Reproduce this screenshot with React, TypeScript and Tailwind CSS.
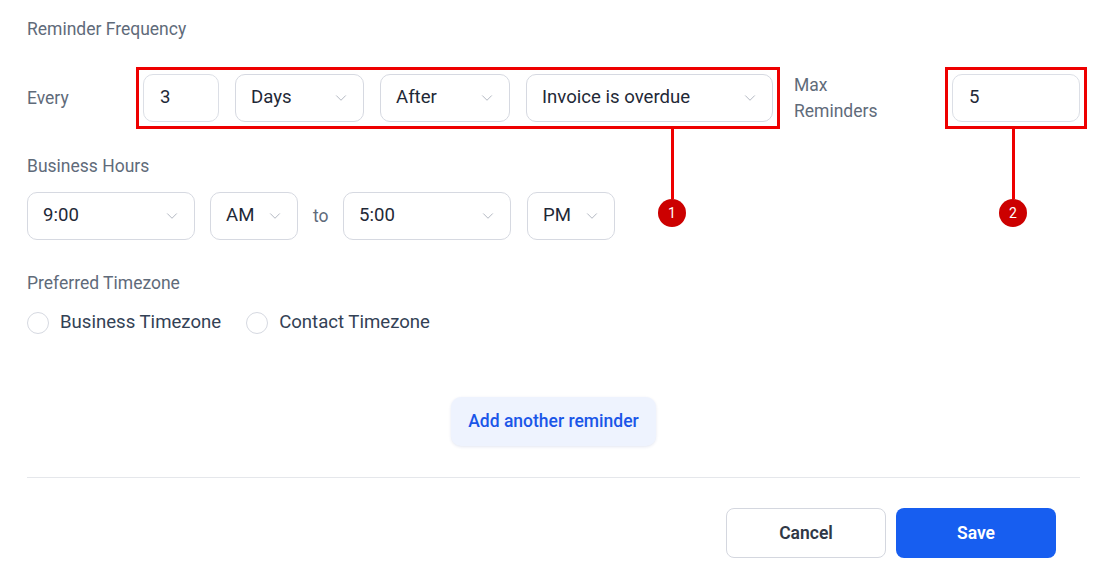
import React from 'react';
import { ChevronDown } from 'lucide-react';

const font = { fontFamily: 'Roboto, "Noto Sans", sans-serif' };

const Select = ({ value, width }: { value: string; width: string }) => (
  <div
    className={`${width} h-12 flex items-center justify-between pl-[15px] pr-[13px] bg-white border border-[#d6d9e1] rounded-[10px] text-[18.6px] text-[#1f2937]`}
  >
    <span>{value}</span>
    <ChevronDown className="w-[18px] h-[18px] text-[#a3a9b5]" strokeWidth={1.1} />
  </div>
);

const TextBox = ({ value, width }: { value: string; width: string }) => (
  <div
    className={`${width} h-12 flex items-center px-[16px] bg-white border border-[#dcdfe6] rounded-[10px] text-[18.6px] text-[#1f2937]`}
  >
    {value}
  </div>
);

// red callout frame with a numbered pin hanging under it
const Callout = ({ num, left }: { num: number; left: string }) => (
  <>
    <div className="absolute -inset-[7px] border-[3px] border-[#ee0000] pointer-events-none" />
    <div className={`absolute top-[55px] ${left} flex flex-col items-center -translate-x-1/2`}>
      <div className="w-[3px] h-[70px] bg-[#ee0000]" />
      <div className="w-7 h-7 rounded-full bg-[#cc0000] text-white text-[14px] flex items-center justify-center">
        {num}
      </div>
    </div>
  </>
);

const Radio = ({ label }: { label: string }) => (
  <label className="flex items-center gap-[11px]">
    <span className="w-[22px] h-[22px] rounded-full border border-[#d6d9e1] bg-white" />
    <span className="text-[18.6px] text-[#334155]">{label}</span>
  </label>
);

const App: React.FC = () => {
  return (
    <div className="w-[1102px] h-[576px] bg-white overflow-hidden pl-[27px] pr-[22px] pt-[17px]" style={font}>
      <div className="text-[17.5px] leading-6 text-[#5f6b7a]">Reminder Frequency</div>

      <div className="mt-[33px] flex items-center">
        <div className="w-[116px] text-[17.5px] text-[#5f6b7a]">Every</div>
        <div className="relative flex gap-4">
          <TextBox value="3" width="w-[76px]" />
          <Select value="Days" width="w-[129px]" />
          <Select value="After" width="w-[130px]" />
          <Select value="Invoice is overdue" width="w-[247px]" />
          <Callout num={1} left="left-[529px]" />
        </div>
        <div className="ml-[21px] w-[158px] -my-[2px] text-[17.5px] leading-[26px] text-[#5f6b7a]">
          Max
          <br />
          Reminders
        </div>
        <div className="relative">
          <TextBox value="5" width="w-[128px]" />
          <Callout num={2} left="left-[61px]" />
        </div>
      </div>

      <div className="mt-[32px] text-[17.5px] leading-6 text-[#5f6b7a]">Business Hours</div>
      <div className="mt-[14px] flex items-center">
        <Select value="9:00" width="w-[168px]" />
        <div className="ml-[15px]">
          <Select value="AM" width="w-[88px]" />
        </div>
        <span className="ml-[15px] w-[15px] text-[17.5px] text-[#5f6b7a]">to</span>
        <div className="ml-[15px]">
          <Select value="5:00" width="w-[168px]" />
        </div>
        <div className="ml-[16px]">
          <Select value="PM" width="w-[88px]" />
        </div>
      </div>

      <div className="mt-[31px] text-[17.5px] leading-6 text-[#5f6b7a]">Preferred Timezone</div>
      <div className="mt-[16px] h-6 flex items-center gap-[25px]">
        <Radio label="Business Timezone" />
        <Radio label="Contact Timezone" />
      </div>

      <div className="mt-[62px] flex justify-center">
        <button className="h-[49px] px-[17px] rounded-[10px] bg-[#eef3fe] shadow-[0_1px_3px_rgba(30,60,140,0.12)] text-[17.5px] font-medium text-[#1a56e8]">
          Add another reminder
        </button>
      </div>

      <div className="mt-[31px] h-px bg-[#e5e7eb]" />

      <div className="mt-[30px] flex justify-end gap-[10px] pr-[24px]">
        <button className="w-[160px] h-[50px] rounded-[8px] border border-[#d4d7df] bg-white text-[17.5px] font-semibold text-[#303846]">
          Cancel
        </button>
        <button className="w-[160px] h-[50px] rounded-[8px] bg-[#175ef0] text-[17.5px] font-semibold text-white">
          Save
        </button>
      </div>
    </div>
  );
};

export default App;
